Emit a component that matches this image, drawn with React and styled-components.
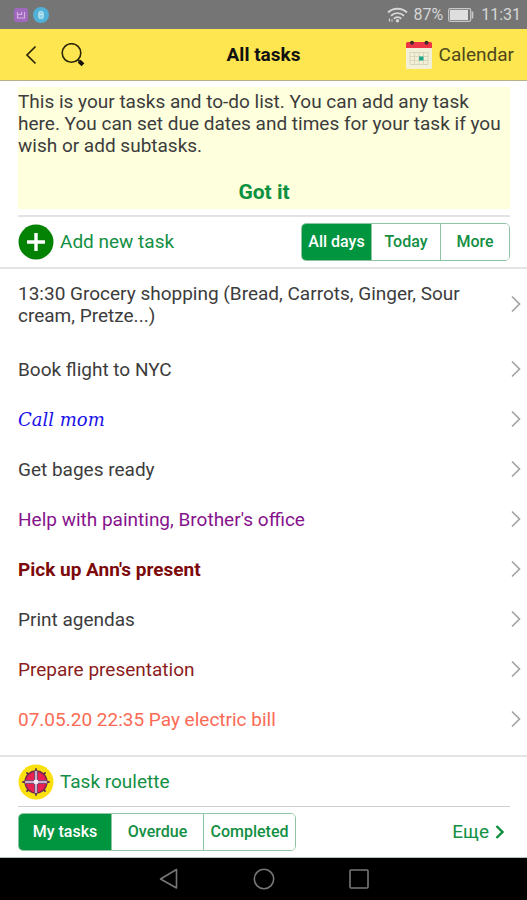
import { useState } from 'react';
import styled, { createGlobalStyle } from 'styled-components';

const tasks = [
  {
    title: '13:30 Grocery shopping (Bread, Carrots, Ginger, Sour cream, Pretze...)',
    long: true,
  },
  { title: 'Book flight to NYC' },
  { title: 'Call mom', color: '#1a10e8', serif: true },
  { title: 'Get bages ready' },
  { title: "Help with painting, Brother's office", color: '#86128c' },
  { title: "Pick up Ann's present", color: '#7d0a0a', bold: true },
  { title: 'Print agendas' },
  { title: 'Prepare presentation', color: '#8a1c20' },
  { title: '07.05.20 22:35 Pay electric bill', color: '#fb6a55' },
];

const days = ['All days', 'Today', 'More'];
const views = ['My tasks', 'Overdue', 'Completed'];

export default function App() {
  const [day, setDay] = useState('All days');
  const [view, setView] = useState('My tasks');

  return (
    <>
      <GlobalStyle />
      <Screen>
        <StatusBar>
          <StatusGroup>
            <NoteIcon />
            <AppIcon />
          </StatusGroup>
          <StatusGroup>
            <WifiIcon />
            <span>87%</span>
            <BatteryIcon />
            <Clock>11:31</Clock>
          </StatusGroup>
        </StatusBar>

        <Header>
          <HeaderTools>
            <IconButton aria-label="Back">
              <svg width="12" height="20" viewBox="0 0 12 20">
                <path d="M10.5 1.5 2 10l8.5 8.5" fill="none" stroke="#2b2607" strokeWidth="1.7" />
              </svg>
            </IconButton>
            <IconButton aria-label="Search">
              <svg width="24" height="24" viewBox="0 0 24 24">
                <circle cx="10.500" cy="10" r="9.300" fill="none" stroke="#2b2607" strokeWidth="1.6" />
                <path d="m16.600 16.400 2 2" stroke="#2b2607" strokeWidth="2" />
                <path d="m18.200 18.200 3.800 3.600" stroke="#15120a" strokeWidth="4" />
              </svg>
            </IconButton>
          </HeaderTools>
          <Title>All tasks</Title>
          <CalendarLink href="#calendar">
            <CalendarIcon />
            Calendar
          </CalendarLink>
        </Header>

        <main>
          <Notice>
            <p>
              This is your tasks and to-do list. You can add any task here. You
              can set due dates and times for your task if you wish or add
              subtasks.
            </p>
            <GotIt>Got it</GotIt>
          </Notice>

          <AddBar>
            <ActionButton>
              <PlusIcon />
              Add new task
            </ActionButton>
            <Segments>
              {days.map((d) => (
                <Segment key={d} $width={69} $active={d === day} onClick={() => setDay(d)}>
                  {d}
                </Segment>
              ))}
            </Segments>
          </AddBar>

          <TaskList>
            {tasks.map((task) => (
              <li key={task.title}>
                <TaskLink
                  href="#task"
                  $color={task.color}
                  $bold={task.bold}
                  $serif={task.serif}
                  $long={task.long}
                >
                  <span>{task.title}</span>
                  <Chevron width="10" height="18" viewBox="0 0 10 18">
                    <path d="m1 1.5 7.5 7.5L1 16.5" fill="none" stroke="#a3a3a3" strokeWidth="1.7" />
                  </Chevron>
                </TaskLink>
              </li>
            ))}
          </TaskList>
        </main>

        <Footer>
          <RouletteBar>
            <ActionButton>
              <RouletteIcon />
              Task roulette
            </ActionButton>
          </RouletteBar>
          <ViewBar>
            <Segments>
              {views.map((v) => (
                <Segment key={v} $width={92} $active={v === view} onClick={() => setView(v)}>
                  {v}
                </Segment>
              ))}
            </Segments>
            <MoreLink href="#more">
              Еще
              <svg width="10" height="14" viewBox="0 0 10 14">
                <path d="m1.5 1 6 6-6 6" fill="none" stroke="#0b8f3a" strokeWidth="2.4" />
              </svg>
            </MoreLink>
          </ViewBar>
        </Footer>

        <SystemNav>
          <IconButton aria-label="System back">
            <svg width="22" height="22" viewBox="0 0 22 22">
              <path d="M18.5 1.5v18.5L2.5 11z" fill="none" stroke="#777" strokeWidth="1.6" strokeLinejoin="round" />
            </svg>
          </IconButton>
          <IconButton aria-label="Home">
            <svg width="22" height="22" viewBox="0 0 22 22">
              <circle cx="11" cy="11" r="9.7" fill="none" stroke="#777" strokeWidth="1.6" />
            </svg>
          </IconButton>
          <IconButton aria-label="Recent apps">
            <svg width="22" height="22" viewBox="0 0 22 22">
              <rect x="2" y="2" width="18" height="18" rx="1" fill="none" stroke="#777" strokeWidth="1.6" />
            </svg>
          </IconButton>
        </SystemNav>
      </Screen>
    </>
  );
}

function NoteIcon() {
  return (
    <svg width="14" height="14" viewBox="0 0 14 14">
      <rect width="14" height="14" rx="2.5" fill="#a068bd" />
      <path d="M3.500 4v6h7V4M3.500 6.500h4M7.500 4v3" fill="none" stroke="#d3b3e2" strokeWidth="1.2" />
    </svg>
  );
}

function AppIcon() {
  return (
    <svg width="16" height="16" viewBox="0 0 16 16">
      <circle cx="8" cy="8" r="8" fill="#4fb0d8" />
      <rect x="5.8" y="4.4" width="4.4" height="7.2" rx="1.6" fill="#8fd0ea" stroke="#c4e7f4" />
      <path d="M6 7.5h4" stroke="#c4e7f4" />
    </svg>
  );
}

function WifiIcon() {
  return (
    <svg width="21" height="16" viewBox="0 0 21 16">
      <g fill="none" stroke="#d6d6d6" strokeWidth="1.9">
        <path d="M1 5.5a14 14 0 0 1 19 0" />
        <path d="M4 8.7a9.5 9.5 0 0 1 13 0" />
        <path d="M6.8 11.7a5.5 5.5 0 0 1 7.4 0" />
      </g>
      <circle cx="10.5" cy="13.8" r="1.7" fill="#d6d6d6" />
      <path d="M2.5 11.5v3M5 12.5v2" stroke="#d6d6d6" strokeWidth="1.2" />
    </svg>
  );
}

function BatteryIcon() {
  return (
    <svg width="26" height="14" viewBox="0 0 26 14">
      <rect x="0.7" y="0.7" width="22" height="12.6" rx="1.5" fill="none" stroke="#c9c9c9" strokeWidth="1.2" />
      <rect x="2" y="2" width="18" height="10" fill="#dedede" />
      <path d="M24.5 3.5v7" stroke="#c9c9c9" strokeWidth="1.6" />
    </svg>
  );
}

function CalendarIcon() {
  return (
    <svg width="28" height="30" viewBox="0 0 28 30">
      <path d="M1 7h26v20.5a1.5 1.5 0 0 1-1.5 1.5h-23A1.5 1.5 0 0 1 1 27.5z" fill="#f3f0d8" />
      <path d="M1 3.5A1.5 1.5 0 0 1 2.500 2h23A1.5 1.5 0 0 1 27 3.5V8H1z" fill="#ee3344" />
      <circle cx="7" cy="2.8" r="2" fill="#3d2a2c" />
      <circle cx="21.5" cy="2.8" r="2" fill="#3d2a2c" />
      <path
        d="M5 12.500h18v12H5zM5 16.500h18M5 20.500h18M9.500 12.500v12M14 12.500v12M18.500 12.500v12"
        fill="none"
        stroke="#d3d0b8"
        strokeWidth="0.8"
      />
      <rect x="14" y="16.500" width="4.500" height="4" fill="#1fa98a" />
    </svg>
  );
}

function PlusIcon() {
  return (
    <svg width="36" height="36" viewBox="0 0 36 36">
      <circle cx="18" cy="18" r="17.5" fill="#048204" />
      <path d="M18 9v18M9 18h18" stroke="#fff" strokeWidth="3.4" />
    </svg>
  );
}

function RouletteIcon() {
  return (
    <svg width="36" height="36" viewBox="0 0 36 36">
      <circle cx="18" cy="18" r="17.5" fill="#fbe010" />
      <g stroke="#5c3152" strokeWidth="1.8" strokeLinecap="round">
        <path d="M18 5v26M5 18h26M9 9l18 18M27 9 9 27" />
      </g>
      <circle cx="18" cy="18" r="11" fill="#ea1f52" stroke="#6b2a4c" strokeWidth="1.3" />
      <path d="M18 7v22M7 18h22" stroke="#6b2a4c" strokeWidth="4" />
      <path d="M18 7v22M7 18h22" stroke="#c9aed0" strokeWidth="2.4" />
      <circle cx="18" cy="18" r="2.4" fill="#f4ecf6" />
    </svg>
  );
}

const GlobalStyle = createGlobalStyle`
  * {
    box-sizing: border-box;
  }

  body {
    margin: 0;
    background: #fff;
    color: #3c3c3c;
    font-family: Roboto, sans-serif;
    font-size: 19px;
    line-height: 22px;
  }

  button {
    padding: 0;
    border: 0;
    background: none;
    font: inherit;
    cursor: pointer;
  }

  a {
    color: inherit;
    text-decoration: none;
  }

  svg {
    display: block;
    flex-shrink: 0;
  }
`;

const Screen = styled.div`
  display: flex;
  flex-direction: column;
  min-height: 100vh;
`;

const StatusBar = styled.div`
  display: flex;
  justify-content: space-between;
  align-items: center;
  height: 29px;
  padding: 0 6px 0 14px;
  background: #757575;
  color: #d6d6d6;
  font-size: 16px;
`;

const StatusGroup = styled.div`
  display: flex;
  align-items: center;
  gap: 5px;
`;

const Clock = styled.span`
  margin-left: 2px;
`;

const Header = styled.header`
  display: grid;
  grid-template-columns: 1fr auto 1fr;
  align-items: center;
  height: 52px;
  padding: 0 13px;
  border-bottom: 1px solid #b9b089;
  background: #fde64f;
`;

const HeaderTools = styled.div`
  display: flex;
  align-items: center;
  gap: 24px;
  padding-left: 12px;
`;

const Title = styled.h1`
  margin: 0;
  color: #111;
  font-size: 19px;
  font-weight: 700;
`;

const IconButton = styled.button`
  display: block;
`;

const CalendarLink = styled.a`
  display: flex;
  justify-content: flex-end;
  align-items: center;
  gap: 6px;
  color: #4d471c;
`;

const Notice = styled.section`
  display: flex;
  flex-direction: column;
  align-items: center;
  gap: 24px;
  margin: 6px 17px 6px 18px;
  padding: 4px 0 6px;
  background: #feffdc;

  p {
    margin: 0;
  }
`;

const GotIt = styled.button`
  color: #0b9140;
  font-size: 21px;
  font-weight: 700;
`;

const AddBar = styled.div`
  display: flex;
  justify-content: space-between;
  align-items: center;
  height: 52px;
  margin: 0 17px 0 18px;
  border-top: 2px solid #e4e2e2;
`;

const ActionButton = styled.button`
  display: flex;
  align-items: center;
  gap: 6px;
  color: #128f43;
`;

const Segments = styled.div`
  display: flex;
  overflow: hidden;
  height: 38px;
  border: 1px solid #8fc5a4;
  border-radius: 5px;
`;

const Segment = styled.button`
  min-width: ${({ $width }) => $width}px;
  padding: 0 4px;
  background: ${({ $active }) => ($active ? '#029540' : '#fff')};
  color: ${({ $active }) => ($active ? '#fff' : '#128f43')};
  font-size: 16px;
  font-weight: 500;

  & + & {
    border-left: 1px solid #8fc5a4;
  }
`;

const TaskList = styled.ul`
  margin: 0;
  padding: 0 0 10px;
  border-top: 2px solid #e4e2e2;
  border-bottom: 2px solid #e4e2e2;
  list-style: none;
`;

const TaskLink = styled.a`
  display: flex;
  justify-content: space-between;
  align-items: center;
  gap: 36px;
  padding: ${({ $long }) => ($long ? '14px 6px 18px 18px' : '14px 6px 14px 18px')};
  color: ${({ $color }) => $color || 'inherit'};
  font-family: ${({ $serif }) => ($serif ? "'DejaVu Serif', serif" : 'inherit')};
  font-size: ${({ $serif }) => ($serif ? '18px' : '19px')};
  font-style: ${({ $serif }) => ($serif ? 'italic' : 'normal')};
  font-weight: ${({ $bold }) => ($bold ? 700 : 400)};
`;

const Chevron = styled.svg`
  margin-bottom: 2px;
`;

const Footer = styled.footer`
  border-bottom: 1px solid #b5c2b9;
`;

const RouletteBar = styled.div`
  display: flex;
  align-items: center;
  height: 50px;
  margin: 0 17px 0 18px;
  border-bottom: 1px solid #cfcfcf;
`;

const ViewBar = styled.div`
  display: flex;
  justify-content: space-between;
  align-items: center;
  height: 50px;
  padding: 0 22px 0 18px;
`;

const MoreLink = styled.a`
  display: flex;
  align-items: center;
  gap: 6px;
  color: #128f43;
`;

const SystemNav = styled.nav`
  display: flex;
  flex: 1;
  justify-content: center;
  align-items: center;
  gap: 73px;
  min-height: 42px;
  background: #000;
`;
